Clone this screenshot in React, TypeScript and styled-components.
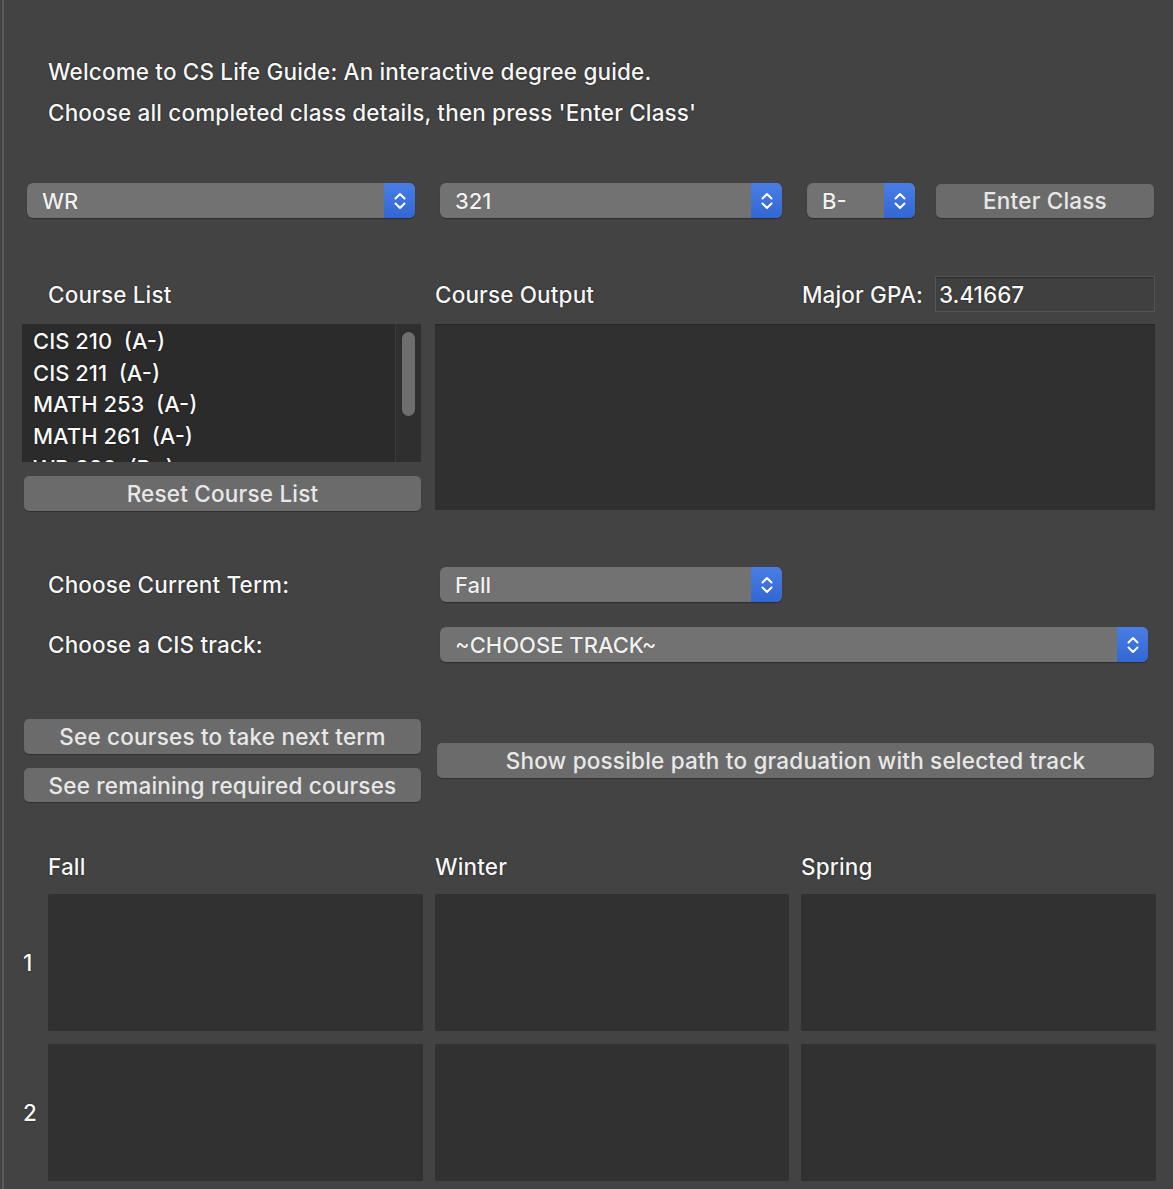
import React from "react";
import styled, { createGlobalStyle } from "styled-components";

const Global = createGlobalStyle`
  html, body { margin: 0; padding: 0; background: #434343; }
  * { box-sizing: border-box; }
`;

const Page = styled.div`
  width: 1173px;
  height: 1189px;
  padding-left: 2px;
  background: #434343;
  font-family: Inter, "Liberation Sans", Arial, sans-serif;
  font-weight: 500;
  color: #f4f4f4;
  overflow: hidden;
`;

const Frame = styled.div`
  height: 100%;
  border-left: 2px solid #5a5a5a;
  display: flex;
  flex-direction: column;
`;

const Text = styled.div`
  font-size: 22.5px;
  letter-spacing: 0.15px;
  color: #f8f8f8;
  text-shadow: 0 0 1.5px rgba(0, 0, 0, 0.9);
  white-space: nowrap;
`;

const Header = styled.div`
  padding: 51px 0 0 44px;
  line-height: 41px;
`;

const SelectRow = styled.div`
  display: flex;
  align-items: center;
  margin: 50px 0 0 23px;
`;

const SelectBox = styled.div<{ $w: number; $ml?: number }>`
  width: ${(p) => p.$w}px;
  margin-left: ${(p) => p.$ml ?? 0}px;
  height: 35px;
  display: flex;
  align-items: stretch;
  background: #727272;
  border-radius: 6px;
  box-shadow: 0 1px 1px rgba(0, 0, 0, 0.35);
  overflow: hidden;
`;

const SelectLabel = styled.div`
  flex: 1;
  display: flex;
  align-items: center;
  padding-left: 15px;
  font-size: 22px;
  color: #f2f2f2;
  white-space: nowrap;
  text-shadow: 0 0 1px rgba(0, 0, 0, 0.4);
`;

const Arrow = styled.div`
  width: 31px;
  display: flex;
  align-items: center;
  justify-content: center;
  background: linear-gradient(#4a7ee6, #3266d2);
`;

const Chevrons = () => (
  <svg width="14" height="22" viewBox="0 0 14 22" fill="none">
    <path d="M2.5 8.5 L7 4 L11.5 8.5" stroke="#fff" strokeWidth="2" strokeLinecap="round" strokeLinejoin="round" />
    <path d="M2.5 13.5 L7 18 L11.5 13.5" stroke="#fff" strokeWidth="2" strokeLinecap="round" strokeLinejoin="round" />
  </svg>
);

const Select = ({ w, ml, label }: { w: number; ml?: number; label: string }) => (
  <SelectBox $w={w} $ml={ml}>
    <SelectLabel>{label}</SelectLabel>
    <Arrow>
      <Chevrons />
    </Arrow>
  </SelectBox>
);

const Button = styled.div<{ $w: number; $h?: number; $ml?: number; $mt?: number }>`
  width: ${(p) => p.$w}px;
  height: ${(p) => p.$h ?? 35}px;
  margin-left: ${(p) => p.$ml ?? 0}px;
  margin-top: ${(p) => p.$mt ?? 0}px;
  background: #6b6b6b;
  border-radius: 5px;
  box-shadow: 0 1px 1px rgba(0, 0, 0, 0.3);
  display: flex;
  align-items: center;
  justify-content: center;
  font-size: 22.5px;
  letter-spacing: 0.2px;
  color: #e8e8e8;
  white-space: nowrap;
`;

const Middle = styled.div`
  display: grid;
  grid-template-columns: 399px 720px;
  column-gap: 14px;
  margin: 58px 0 0 18px;
`;

const LabelRow = styled.div<{ $pl: number }>`
  height: 36px;
  display: flex;
  align-items: center;
  padding-left: ${(p) => p.$pl}px;
`;

const GpaWrap = styled.div`
  display: flex;
  align-items: center;
  margin-left: auto;
`;

const GpaInput = styled.div`
  width: 220px;
  height: 36px;
  margin-left: 12px;
  background: #404040;
  border: 1px solid #555;
  box-shadow: inset 0 1px 1px rgba(0, 0, 0, 0.3);
  display: flex;
  align-items: center;
  padding-left: 3px;
  font-size: 22.5px;
  color: #f8f8f8;
  text-shadow: 0 0 1.5px rgba(0, 0, 0, 0.9);
`;

const LeftCol = styled.div`
  display: flex;
  flex-direction: column;
  margin-top: 12px;
`;

const ListBox = styled.div`
  height: 138px;
  background: #2b2b2b;
  display: flex;
  overflow: hidden;
`;

const ListItems = styled.div`
  flex: 1;
  padding: 2px 0 0 11px;
  line-height: 31.7px;
  font-size: 22px;
  color: #fafafa;
  text-shadow: 0 0 1.5px rgba(0, 0, 0, 1);
  white-space: pre;
`;

const ScrollTrack = styled.div`
  width: 26px;
  background: #2f2f2f;
  border-left: 1px solid #3a3a3a;
  padding: 8px 6px 0 6px;
`;

const ScrollThumb = styled.div`
  height: 84px;
  border-radius: 7px;
  background: #6e6e6e;
`;

const OutputBox = styled.div`
  margin-top: 12px;
  height: 186px;
  background: #303030;
  box-shadow: inset 0 1px 1px rgba(0, 0, 0, 0.25);
`;

const FormRow = styled.div<{ $mt: number }>`
  display: grid;
  grid-template-columns: 392px auto;
  align-items: center;
  margin: ${(p) => p.$mt}px 0 0 44px;
`;

const ActionArea = styled.div`
  display: grid;
  grid-template-columns: 397px 717px;
  column-gap: 16px;
  margin: 57px 0 0 20px;
`;

const StackedButtons = styled.div`
  display: flex;
  flex-direction: column;
  gap: 14px;
`;

const CenterCell = styled.div`
  display: flex;
  align-items: center;
`;

const Schedule = styled.div`
  display: grid;
  grid-template-columns: 32px 375px 354px 355px;
  grid-template-rows: 30px 137px 137px;
  column-gap: 12px;
  row-gap: 13px;
  margin: 49px 0 0 0;
`;

const Season = styled(Text)`
  display: flex;
  align-items: center;
`;

const RowNum = styled(Text)`
  display: flex;
  align-items: center;
  padding-left: 19px;
`;

const Cell = styled.div`
  background: #313131;
  border-radius: 2px;
`;

const courses = ["CIS 210  (A-)", "CIS 211  (A-)", "MATH 253  (A-)", "MATH 261  (A-)", "WR 320  (B+)"];

export default function App() {
  return (
    <>
      <Global />
      <Page>
        <Frame>
          <Header>
            <Text>Welcome to CS Life Guide: An interactive degree guide.</Text>
            <Text>Choose all completed class details, then press 'Enter Class'</Text>
          </Header>

          <SelectRow>
            <Select w={388} label="WR" />
            <Select w={342} ml={25} label="321" />
            <Select w={108} ml={25} label="B-" />
            <Button $w={218} $h={34} $ml={21}>Enter Class</Button>
          </SelectRow>

          <Middle>
            <div>
              <LabelRow $pl={26}>
                <Text>Course List</Text>
              </LabelRow>
              <LeftCol>
                <ListBox>
                  <ListItems>
                    {courses.map((c) => (
                      <div key={c}>{c}</div>
                    ))}
                  </ListItems>
                  <ScrollTrack>
                    <ScrollThumb />
                  </ScrollTrack>
                </ListBox>
                <Button $w={397} $ml={2} $mt={14}>Reset Course List</Button>
              </LeftCol>
            </div>
            <div>
              <LabelRow $pl={0}>
                <Text>Course Output</Text>
                <GpaWrap>
                  <Text>Major GPA:</Text>
                  <GpaInput>3.41667</GpaInput>
                </GpaWrap>
              </LabelRow>
              <OutputBox />
            </div>
          </Middle>

          <FormRow $mt={56}>
            <Text>Choose Current Term:</Text>
            <Select w={342} label="Fall" />
          </FormRow>
          <FormRow $mt={25}>
            <Text>Choose a CIS track:</Text>
            <Select w={708} label="~CHOOSE TRACK~" />
          </FormRow>

          <ActionArea>
            <StackedButtons>
              <Button $w={397}>See courses to take next term</Button>
              <Button $w={397} $h={34}>See remaining required courses</Button>
            </StackedButtons>
            <CenterCell>
              <Button $w={717}>Show possible path to graduation with selected track</Button>
            </CenterCell>
          </ActionArea>

          <Schedule>
            <div />
            <Season>Fall</Season>
            <Season>Winter</Season>
            <Season>Spring</Season>
            <RowNum>1</RowNum>
            <Cell />
            <Cell />
            <Cell />
            <RowNum>2</RowNum>
            <Cell />
            <Cell />
            <Cell />
          </Schedule>
        </Frame>
      </Page>
    </>
  );
}
